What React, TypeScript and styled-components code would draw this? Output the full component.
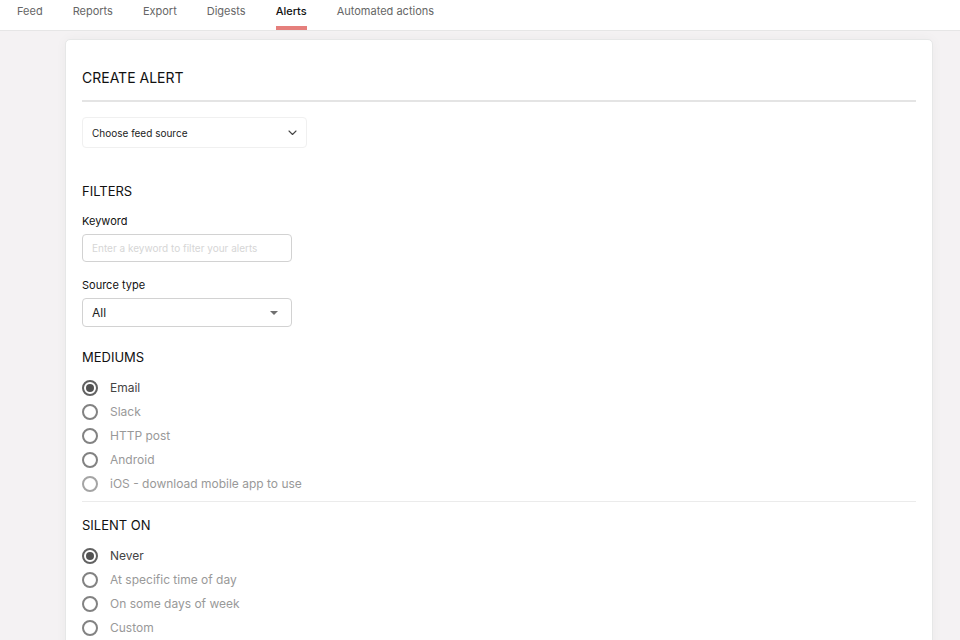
import React, { useState } from "react";
import styled, { createGlobalStyle } from "styled-components";

const GlobalStyle = createGlobalStyle`
  *, *::before, *::after { box-sizing: border-box; }
  body {
    margin: 0;
    background: #f4f2f3;
    color: #111;
    font-family: Inter, "Liberation Sans", sans-serif;
  }
`;

const Page = styled.div`
  display: flex;
  flex-direction: column;
  height: 100vh;
`;

const Nav = styled.nav`
  display: flex;
  flex: none;
  gap: 30px;
  padding: 0 17px;
  background: #fff;
  border-bottom: 1px solid #e6e6e6;
`;

const NavLink = styled.a`
  height: 30px;
  padding-top: 3px;
  border-bottom: 4px solid transparent;
  color: #666;
  font-size: 11px;
  line-height: 16px;
  text-decoration: none;
  white-space: nowrap;

  &[aria-current="page"] {
    color: #111;
    font-weight: 500;
    border-bottom-color: #e57f7c;
  }
`;

const Main = styled.main`
  flex: 1;
  min-height: 0;
  padding: 8px 27px 0 65px;
  overflow-y: auto;
  scrollbar-width: none;
`;

const Card = styled.form`
  padding: 24px 16px;
  background: #fff;
  border: 1px solid #e6e7e7;
  border-radius: 5px;
  box-shadow: 0 0 12px rgba(0, 0, 0, 0.04);
`;

const Title = styled.h1`
  margin: 0 0 15px;
  padding-bottom: 8px;
  border-bottom: 2px solid #e4e4e4;
  font-size: 14px;
  font-weight: 400;
  line-height: 28px;
`;

const Heading = styled.h2`
  margin: 0 0 8px;
  font-size: 13px;
  font-weight: 400;
  line-height: 24px;
`;

const Filters = styled.section`
  display: flex;
  flex-direction: column;
  width: 210px;
  margin: 31px 0 18px;
`;

const Label = styled.label`
  margin-bottom: 3px;
  font-size: 11px;
  line-height: 20px;
`;

const KeywordInput = styled.input`
  width: 100%;
  height: 28px;
  margin-bottom: 13px;
  padding: 0 9px;
  border: 1px solid #d2d2d2;
  border-radius: 4px;
  background: #fff;
  color: #222;
  font: 10px Inter, "Liberation Sans", sans-serif;

  &::placeholder { color: #d6d6d6; opacity: 1; }
`;

const SelectBox = styled.div<{ $feed?: boolean }>`
  position: relative;
  width: ${(p) => (p.$feed ? "225px" : "100%")};

  svg {
    position: absolute;
    top: 0;
    bottom: 0;
    right: ${(p) => (p.$feed ? "10px" : "14px")};
    margin: auto 0;
    pointer-events: none;
  }
`;

const Select = styled.select<{ $feed?: boolean }>`
  display: block;
  appearance: none;
  width: 100%;
  height: ${(p) => (p.$feed ? "31px" : "29px")};
  padding: 0 28px 0 9px;
  border: 1px solid ${(p) => (p.$feed ? "#f0f0f0" : "#d2d2d2")};
  border-radius: 4px;
  background: #fff;
  color: #222;
  font: ${(p) => (p.$feed ? "10px" : "12px")} Inter, "Liberation Sans", sans-serif;
`;

const Group = styled.section`
  & + & {
    margin-top: 9px;
    padding-top: 11px;
    border-top: 1px solid #ebebeb;
  }
`;

const Options = styled.div`
  display: grid;
  grid-auto-rows: 16px;
  row-gap: 8px;
  padding-top: 3px;
`;

const Option = styled.label`
  display: flex;
  align-items: center;
  gap: 12px;
  color: #999;
  font-size: 12px;
  line-height: 16px;

  &:has(input:checked) { color: #444; }
`;

const Radio = styled.input<{ $faded?: boolean }>`
  appearance: none;
  display: grid;
  place-items: center;
  flex: none;
  width: 16px;
  height: 16px;
  margin: 0;
  border: 2px solid ${(p) => (p.$faded ? "#a4a4a4" : "#828282")};
  border-radius: 50%;

  &:checked { border-color: #626262; }
  &:checked::before {
    content: "";
    width: 8px;
    height: 8px;
    border-radius: 50%;
    background: #525252;
  }
`;

const tabs = ["Feed", "Reports", "Export", "Digests", "Alerts", "Automated actions"];
const mediums = ["Email", "Slack", "HTTP post", "Android", "iOS - download mobile app to use"];
const silences = ["Never", "At specific time of day", "On some days of week", "Custom"];

function RadioGroup({ title, name, items }: { title: string; name: string; items: string[] }) {
  const [value, setValue] = useState(items[0]);
  return (
    <Group role="radiogroup" aria-labelledby={name}>
      <Heading id={name}>{title}</Heading>
      <Options>
        {items.map((item) => (
          <Option key={item}>
            <Radio
              type="radio"
              name={name}
              checked={value === item}
              $faded={item.startsWith("iOS")}
              onChange={() => setValue(item)}
            />
            {item}
          </Option>
        ))}
      </Options>
    </Group>
  );
}

export default function App() {
  return (
    <Page>
      <GlobalStyle />
      <Nav>
        {tabs.map((tab) => (
          <NavLink key={tab} href="#" aria-current={tab === "Alerts" ? "page" : undefined}>
            {tab}
          </NavLink>
        ))}
      </Nav>
      <Main>
        <Card>
          <Title>CREATE ALERT</Title>
          <SelectBox $feed>
            <Select $feed aria-label="Feed source">
              <option>Choose feed source</option>
            </Select>
            <svg width="9" height="6" viewBox="0 0 9 6" fill="none" stroke="#444" strokeWidth="1.1">
              <path d="M1 1 4.5 4.5 8 1" strokeLinecap="round" strokeLinejoin="round" />
            </svg>
          </SelectBox>
          <Filters>
            <Heading>FILTERS</Heading>
            <Label htmlFor="keyword">Keyword</Label>
            <KeywordInput id="keyword" placeholder="Enter a keyword to filter your alerts" />
            <Label htmlFor="source-type">Source type</Label>
            <SelectBox>
              <Select id="source-type">
                <option>All</option>
              </Select>
              <svg width="8" height="4" viewBox="0 0 8 4">
                <path d="M0 0h8L4 4z" fill="#707070" />
              </svg>
            </SelectBox>
          </Filters>
          <RadioGroup title="MEDIUMS" name="medium" items={mediums} />
          <RadioGroup title="SILENT ON" name="silent" items={silences} />
        </Card>
      </Main>
    </Page>
  );
}
